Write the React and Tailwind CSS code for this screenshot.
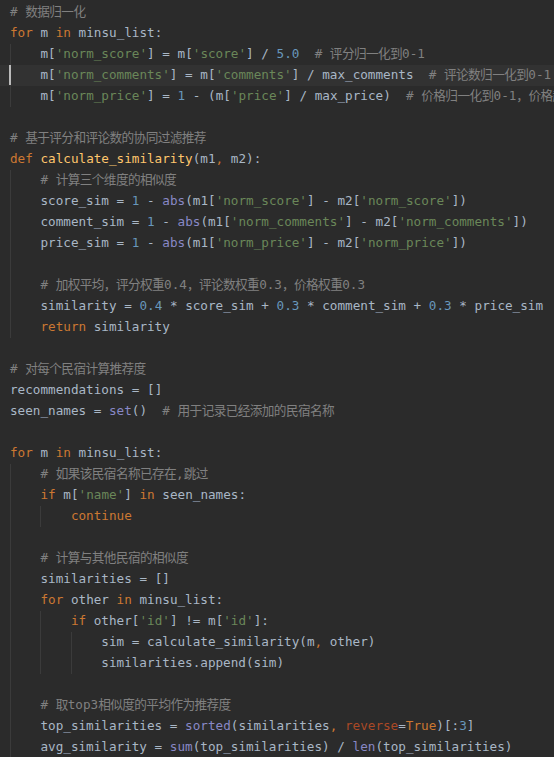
import React from "react";

const code = [
  [0, "# 数据归一化"],
  [0, "for m in minsu_list:"],
  [1, "m['norm_score'] = m['score'] / 5.0  # 评分归一化到0-1"],
  [1, "m['norm_comments'] = m['comments'] / max_comments  # 评论数归一化到0-1"],
  [1, "m['norm_price'] = 1 - (m['price'] / max_price)  # 价格归一化到0-1，价格越低越好"],
  [0, ""],
  [0, "# 基于评分和评论数的协同过滤推荐"],
  [0, "def calculate_similarity(m1, m2):"],
  [1, "# 计算三个维度的相似度"],
  [1, "score_sim = 1 - abs(m1['norm_score'] - m2['norm_score'])"],
  [1, "comment_sim = 1 - abs(m1['norm_comments'] - m2['norm_comments'])"],
  [1, "price_sim = 1 - abs(m1['norm_price'] - m2['norm_price'])"],
  [1, ""],
  [1, "# 加权平均，评分权重0.4，评论数权重0.3，价格权重0.3"],
  [1, "similarity = 0.4 * score_sim + 0.3 * comment_sim + 0.3 * price_sim"],
  [1, "return similarity"],
  [0, ""],
  [0, "# 对每个民宿计算推荐度"],
  [0, "recommendations = []"],
  [0, "seen_names = set()  # 用于记录已经添加的民宿名称"],
  [0, ""],
  [0, "for m in minsu_list:"],
  [1, "# 如果该民宿名称已存在,跳过"],
  [1, "if m['name'] in seen_names:"],
  [2, "continue"],
  [1, ""],
  [1, "# 计算与其他民宿的相似度"],
  [1, "similarities = []"],
  [1, "for other in minsu_list:"],
  [2, "if other['id'] != m['id']:"],
  [3, "sim = calculate_similarity(m, other)"],
  [3, "similarities.append(sim)"],
  [1, ""],
  [1, "# 取top3相似度的平均作为推荐度"],
  [1, "top_similarities = sorted(similarities, reverse=True)[:3]"],
  [1, "avg_similarity = sum(top_similarities) / len(top_similarities)"],
];

const keywords = ["for", "in", "def", "return", "if", "continue", "True", "False", "None"];
const builtins = ["abs", "set", "sorted", "sum", "len"];

const colors = {
  text: "text-[#a9b7c6]",
  comment: "text-[#808080]",
  keyword: "text-[#cc7832]",
  string: "text-[#6a8759]",
  number: "text-[#6897bb]",
  builtin: "text-[#8888c6]",
  fn: "text-[#ffc66d]",
  kwarg: "text-[#aa4926]",
};

// split a comment so CJK runs can be tightened to the editor's fallback width
function Comment({ text }) {
  const parts = text.split(/([\u3000-\u9fff\uff00-\uffef]+)/);
  return (
    <span className={`shrink-0 ${colors.comment}`}>
      {parts.map((p, i) =>
        /[\u3000-\u9fff\uff00-\uffef]/.test(p) ? (
          <span key={i} className="tracking-[-0.6px]">{p}</span>
        ) : (
          <span key={i}>{p}</span>
        )
      )}
    </span>
  );
}

function tokenize(line) {
  const re = /(#.*$)|('[^']*')|(\d+(?:\.\d+)?)|([A-Za-z_]\w*)|(\s+)|(.)/g;
  const out = [];
  let prev = null;
  let m;
  while ((m = re.exec(line))) {
    const [tok, comment, str, num, ident] = m;
    let type = "text";
    if (comment) type = "comment";
    else if (str) type = "string";
    else if (num) type = "number";
    else if (ident) {
      const rest = line.slice(re.lastIndex);
      if (keywords.includes(tok)) type = "keyword";
      else if (builtins.includes(tok) && rest.startsWith("(")) type = "builtin";
      else if (prev === "def") type = "fn";
      else if (rest.startsWith("=") && !rest.startsWith("==")) type = "kwarg";
      prev = tok;
    } else if (tok === ",") type = "keyword";
    out.push([type, tok]);
  }
  return out;
}

function CodeLine({ level, text, current }) {
  return (
    <div
      className={`relative flex h-[21px] items-center whitespace-pre pl-[10px] ${
        current ? "bg-[#323232]" : ""
      }`}
    >
      {current && <span className="absolute left-[9px] top-0 h-[20px] w-[2px] bg-[#bbbbbb]" />}
      {Array.from({ length: level }).map((_, i) => (
        <span key={i} className="inline-block h-[21px] w-[4ch] shrink-0 border-l border-[#3b3b3b]" />
      ))}
      {tokenize(text).map(([type, tok], i) =>
        type === "comment" ? (
          <Comment key={i} text={tok} />
        ) : (
          <span key={i} className={`shrink-0 ${colors[type]}`}>{tok}</span>
        )
      )}
    </div>
  );
}

export default function App() {
  return (
    <div className="h-[757px] w-full overflow-hidden bg-[#2b2b2b] pt-[2px] font-['DejaVu_Sans_Mono','Noto_Sans_CJK_SC',monospace] text-[12.65px] text-[#a9b7c6]">
      {code.map(([level, text], i) => (
        <CodeLine key={i} level={level} text={text} current={i === 3} />
      ))}
    </div>
  );
}
